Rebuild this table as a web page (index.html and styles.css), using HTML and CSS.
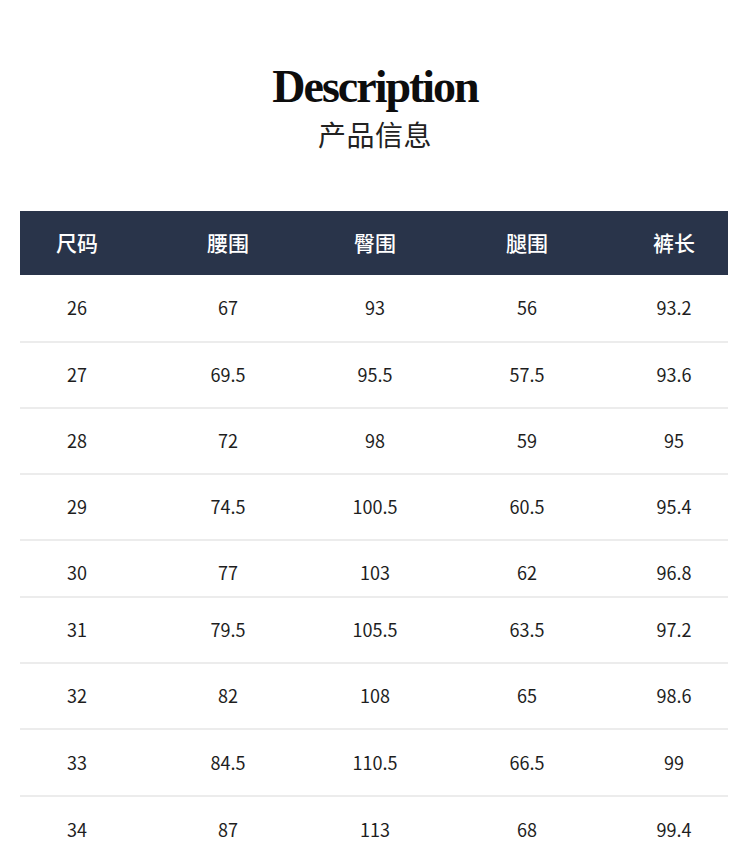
FILE: index.html
```html
<!DOCTYPE html>
<html lang="zh-CN">
<head>
<meta charset="utf-8">
<title>Description</title>
<link rel="stylesheet" href="styles.css">
</head>
<body>
<div class="page">
  <header class="intro">
    <h1 class="title">Description</h1>
    <p class="subtitle">产品信息</p>
  </header>
  <div class="size-table">
    <div class="row head">
      <div class="cell">尺码</div><div class="cell">腰围</div><div class="cell">臀围</div><div class="cell">腿围</div><div class="cell">裤长</div>
    </div>
    <div class="row r68"><div class="cell">26</div><div class="cell">67</div><div class="cell">93</div><div class="cell">56</div><div class="cell">93.2</div></div>
    <div class="row r66"><div class="cell">27</div><div class="cell">69.5</div><div class="cell">95.5</div><div class="cell">57.5</div><div class="cell">93.6</div></div>
    <div class="row r66"><div class="cell">28</div><div class="cell">72</div><div class="cell">98</div><div class="cell">59</div><div class="cell">95</div></div>
    <div class="row r66"><div class="cell">29</div><div class="cell">74.5</div><div class="cell">100.5</div><div class="cell">60.5</div><div class="cell">95.4</div></div>
    <div class="row r57"><div class="cell">30</div><div class="cell">77</div><div class="cell">103</div><div class="cell">62</div><div class="cell">96.8</div></div>
    <div class="row r66"><div class="cell">31</div><div class="cell">79.5</div><div class="cell">105.5</div><div class="cell">63.5</div><div class="cell">97.2</div></div>
    <div class="row r66"><div class="cell">32</div><div class="cell">82</div><div class="cell">108</div><div class="cell">65</div><div class="cell">98.6</div></div>
    <div class="row r67"><div class="cell">33</div><div class="cell">84.5</div><div class="cell">110.5</div><div class="cell">66.5</div><div class="cell">99</div></div>
    <div class="row r66 last"><div class="cell">34</div><div class="cell">87</div><div class="cell">113</div><div class="cell">68</div><div class="cell">99.4</div></div>
  </div>
</div>
</body>
</html>
```

FILE: styles.css
```css
html, body {
  margin: 0;
  padding: 0;
  background: #ffffff;
}
body {
  font-family: "Noto Sans CJK SC", "Noto Sans", sans-serif;
  color: #1e1e1e;
}
.page {
  width: 750px;
}
.intro {
  display: flex;
  flex-direction: column;
  align-items: center;
  padding-top: 64px;
}
.title {
  margin: 0;
  font-family: "Liberation Serif", "DejaVu Serif", serif;
  font-weight: 700;
  font-size: 46px;
  line-height: 46px;
  letter-spacing: -2px;
  color: #0d0d0d;
}
.subtitle {
  margin: 10px 0 0;
  font-size: 28px;
  line-height: 28px;
  font-weight: 400;
  color: #222222;
  letter-spacing: 0.5px;
}
.size-table {
  margin: 63px 22px 0 20px;
  display: flex;
  flex-direction: column;
}
.row {
  display: grid;
  grid-template-columns: 114px 188px 106px 198px 96px;
  align-items: center;
  box-sizing: border-box;
  border-bottom: 2px solid #ececec;
  padding-bottom: 2px;
  font-size: 18px;
  color: #1e1e1e;
}
.cell {
  text-align: center;
}
.head {
  height: 64px;
  background: #29344a;
  border-bottom: none;
  padding-bottom: 2px;
  color: #ffffff;
  font-size: 21px;
  font-weight: 500;
}
.r68 { height: 68px; }
.r66 { height: 66px; }
.r67 { height: 67px; }
.r57 { height: 57px; padding-top: 8px; }
.last { border-bottom: none; }
```
